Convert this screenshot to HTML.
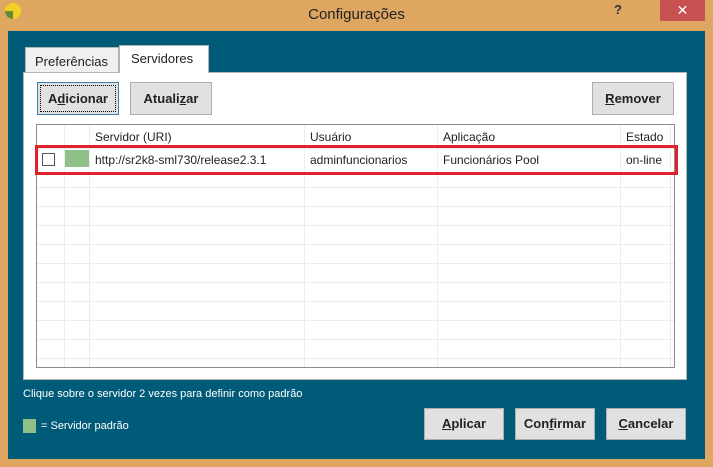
<!DOCTYPE html>
<html><head><meta charset="utf-8"><style>
*{box-sizing:border-box;margin:0;padding:0}
body{width:713px;height:467px;background:#dfa662;position:relative;overflow:hidden;font-family:"Liberation Sans",sans-serif;font-size:12px;color:#000}
.abs{position:absolute}
.title{left:0;top:6px;width:713px;text-align:center;font-size:15px;color:#222}
.main{left:8px;top:31px;width:697px;height:428px;background:#005b79}
.btn{position:absolute;background:#e1e1e1;border:1px solid #adadad;font-weight:bold;font-size:13px;text-align:center;color:#222}
.panel{left:23px;top:72px;width:664px;height:308px;background:#fff;border:1px solid #b5b5b5}
.grid{left:36px;top:124px;width:639px;height:244px;border:1px solid #8a8a8a;background:#fff;overflow:hidden}
.hl{position:absolute;left:0;width:639px;height:1px;background:#ececec}
.vl{position:absolute;top:0;width:1px;height:244px;background:#ececec}
.t{position:absolute;font-size:12px;color:#222;white-space:nowrap}
u{text-decoration:underline}
</style></head><body>
<div class="abs" style="left:5px;top:3px;width:16px;height:16px;border-radius:50%;background:conic-gradient(#f0d020 0 180deg,#6a8a3a 180deg 270deg,#f0d020 270deg)"></div>
<div class="abs title">Configurações</div>
<div class="abs" style="left:614px;top:2px;font-weight:bold;font-size:13px;color:#333">?</div>
<div class="abs" style="left:660px;top:0;width:45px;height:21px;background:#c75050;color:#fff;text-align:center;font-size:14px;line-height:20px">✕</div>
<div class="abs main"></div>
<div class="abs" style="left:25px;top:47px;width:94px;height:26px;background:#f0f0f0;border:1px solid #b5b5b5;font-size:13px;padding:6px 0 0 9px;color:#222">Preferências</div>
<div class="abs" style="left:119px;top:45px;width:90px;height:28px;background:#fff;border:1px solid #b5b5b5;border-bottom:none;font-size:13px;padding:5px 0 0 11px;color:#222;z-index:2">Servidores</div>
<div class="abs panel"></div>
<div class="btn" style="left:37px;top:82px;width:82px;height:33px;line-height:31px;border-color:#3c7fb1;outline:1px dotted #000;outline-offset:-4px">A<u>d</u>icionar</div>
<div class="btn" style="left:130px;top:82px;width:82px;height:33px;line-height:31px">Atuali<u>z</u>ar</div>
<div class="btn" style="left:592px;top:82px;width:82px;height:33px;line-height:31px"><u>R</u>emover</div>
<div class="abs grid">
<div class="hl" style="top:23px"></div>
<div class="hl" style="top:47px"></div>
<div class="hl" style="top:62px"></div><div class="hl" style="top:81px"></div><div class="hl" style="top:100px"></div><div class="hl" style="top:119px"></div><div class="hl" style="top:138px"></div><div class="hl" style="top:157px"></div><div class="hl" style="top:176px"></div><div class="hl" style="top:195px"></div><div class="hl" style="top:214px"></div><div class="hl" style="top:233px"></div>
<div class="vl" style="left:27px"></div><div class="vl" style="left:52px"></div><div class="vl" style="left:267px"></div><div class="vl" style="left:400px"></div><div class="vl" style="left:583px"></div><div class="vl" style="left:633px"></div>
<div class="t" style="left:58px;top:5px">Servidor (URI)</div>
<div class="t" style="left:273px;top:5px">Usuário</div>
<div class="t" style="left:406px;top:5px">Aplicação</div>
<div class="t" style="left:589px;top:5px">Estado</div>
<div class="abs" style="left:5px;top:28px;width:13px;height:13px;border:1px solid #555;background:#fff"></div>
<div class="abs" style="left:28px;top:25px;width:24px;height:17px;background:#8fc08a"></div>
<div class="t" style="left:58px;top:28px">http://sr2k8-sml730/release2.3.1</div>
<div class="t" style="left:273px;top:28px">adminfuncionarios</div>
<div class="t" style="left:406px;top:28px">Funcionários Pool</div>
<div class="t" style="left:589px;top:28px">on-line</div>
</div>
<div class="abs" style="left:35px;top:145px;width:643px;height:30px;border:3px solid #e0202a"></div>
<div class="abs" style="left:23px;top:388px;color:#fff;font-size:11px">Clique sobre o servidor 2 vezes para definir como padrão</div>
<div class="abs" style="left:23px;top:419px;width:13px;height:14px;background:#8fc08a"></div>
<div class="abs" style="left:41px;top:420px;color:#fff;font-size:11px">= Servidor padrão</div>
<div class="btn" style="left:424px;top:408px;width:80px;height:32px;line-height:30px"><u>A</u>plicar</div>
<div class="btn" style="left:515px;top:408px;width:80px;height:32px;line-height:30px">Con<u>f</u>irmar</div>
<div class="btn" style="left:606px;top:408px;width:80px;height:32px;line-height:30px"><u>C</u>ancelar</div>
</body></html>
